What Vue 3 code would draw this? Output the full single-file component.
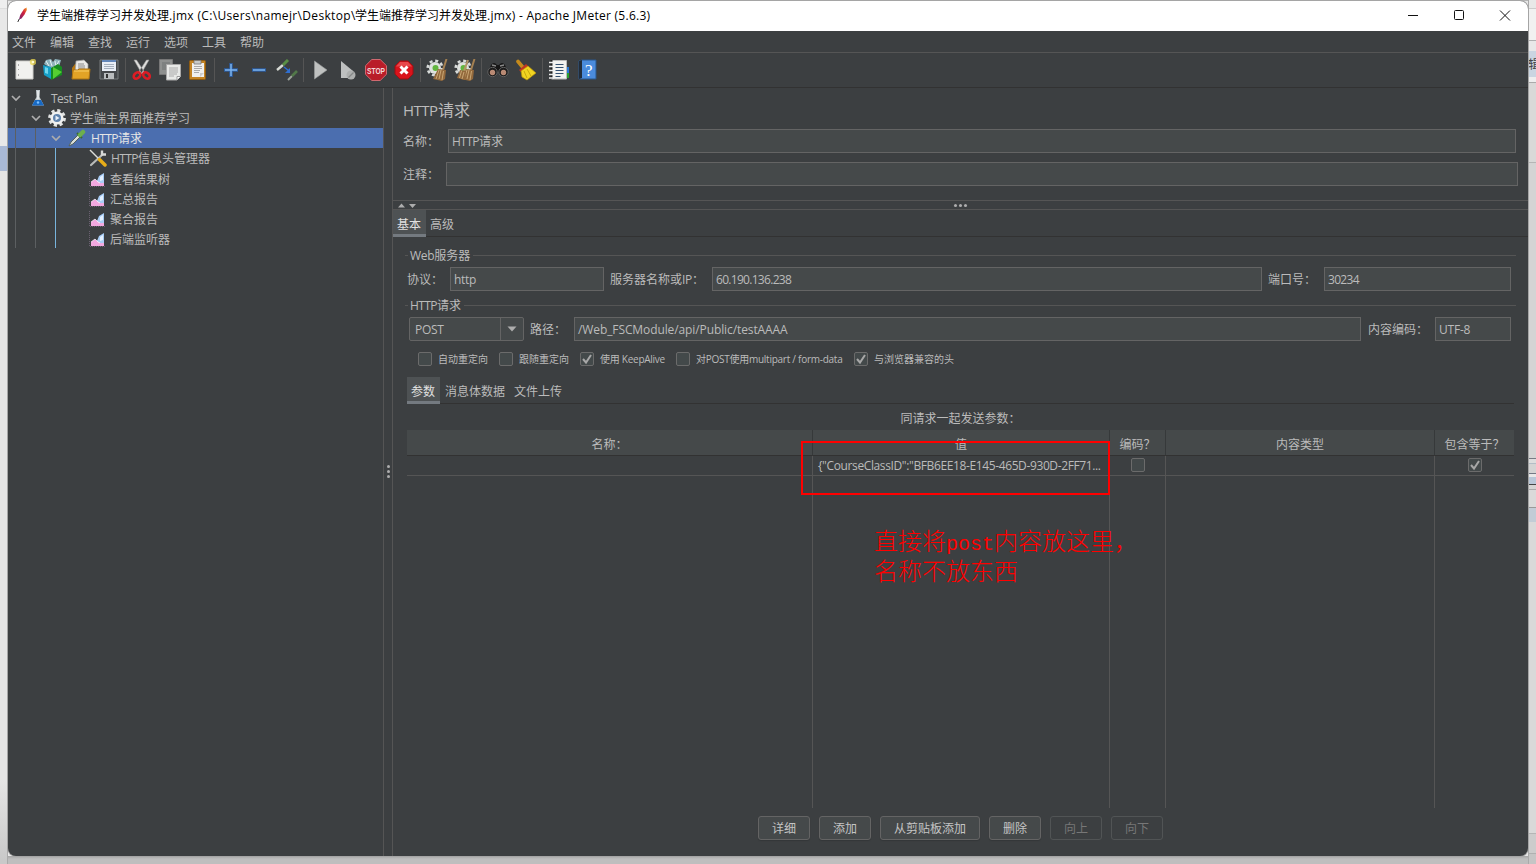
<script setup>
const menus = ['文件', '编辑', '查找', '运行', '选项', '工具', '帮助']

const listeners = ['查看结果树', '汇总报告', '聚合报告', '后端监听器']

const options = [
  { label: '自动重定向', checked: false, width: 81 },
  { label: '跟随重定向', checked: false, width: 81 },
  { label: '使用 KeepAlive', checked: true, width: 96, tight: true },
  { label: '对POST使用multipart / form-data', checked: false, width: 178, tight: true },
  { label: '与浏览器兼容的头', checked: true, width: 110 },
]

const buttons = [
  { label: '详细' },
  { label: '添加' },
  { label: '从剪贴板添加' },
  { label: '删除' },
  { label: '向上', disabled: true },
  { label: '向下', disabled: true },
]
</script>

<template>
  <div class="desktop">
    <div class="behind-left"></div>
    <div class="behind-right"><span>编辑</span></div>

    <div class="window">
      <header class="titlebar">
        <svg class="feather" width="12" height="16" viewBox="0 0 12 16">
          <defs>
            <linearGradient id="feather" x1="1" y1="0" x2="0" y2="1">
              <stop offset="0" stop-color="#f09a1c" />
              <stop offset="0.4" stop-color="#d4213c" />
              <stop offset="1" stop-color="#6b2273" />
            </linearGradient>
          </defs>
          <path d="M9.5 .6 7 2 3.2 8 2 12.5 4.5 11.5 7.5 7.5 9.8 3z" fill="url(#feather)" />
          <path d="M2.2 12 .8 15" stroke="#333" fill="none" />
        </svg>
        <h1>
          学生端推荐学习并发处理<span class="path">.jmx (C:\Users\namejr\Desktop\</span>学生端推荐学习并发处理<span class="product">.jmx) - Apache JMeter (5.6.3)</span>
        </h1>
        <div class="controls">
          <svg viewBox="0 0 12 12"><path d="M1 5.5h10" /></svg>
          <svg viewBox="0 0 12 12"><rect x="1.5" y=".5" width="9" height="9" rx="1" /></svg>
          <svg viewBox="0 0 12 12"><path d="M1 .5l10 10M11 .5l-10 10" /></svg>
        </div>
      </header>

      <nav class="menubar">
        <span v-for="menu in menus" :key="menu">{{ menu }}</span>
      </nav>

      <div class="toolbar">
        <!-- new -->
        <svg viewBox="0 0 22 22">
          <path d="M2 2h17v18H2z" fill="#f1f1ef" stroke="#cfcfcb" />
          <path d="M4.5 5v2M4.5 10v1M4.5 15v2" stroke="#aaa" />
          <circle cx="19" cy="3" r="3.2" fill="#e9d64d" opacity=".75" />
          <circle cx="19" cy="3" r="1.3" fill="#fffbd0" />
        </svg>
        <!-- templates -->
        <svg viewBox="0 0 22 22">
          <path d="M2 5l2-4 5-1 2 3 2-3 6 1-2 7-8 1z" fill="#8fb3bc" />
          <path d="M4 2l3 5M8 1l2 6M13 2l1 6M17 2l-3 5" stroke="#e4f1f1" />
          <path d="M1 6l8 2v12l-7-4z" fill="#169fc7" />
          <path d="M3 8l3 1v6l-3-1z" fill="#6dd6ec" />
          <path d="M9 9l7-4 4 3v8l-11 5z" fill="#168b21" />
          <path d="M11 8l9 5-9 7z" fill="#55cf32" />
        </svg>
        <!-- open -->
        <svg viewBox="0 0 22 22">
          <path d="M2 9l3-4h4v14H2z" fill="#b87812" />
          <path d="M6 2l8-1 4 4v9H5z" fill="#e9e9e7" stroke="#999" stroke-width=".7" />
          <path d="M8 5h6M8 7h7M8 9h7" stroke="#888" />
          <path d="M3 11h5l1-1h11l-1 10H2z" fill="#e2a326" stroke="#ad7413" />
          <path d="M4 12h15" stroke="#f8cd65" />
        </svg>
        <!-- save -->
        <svg viewBox="0 0 22 22">
          <path d="M2 1h18v19H2z" fill="#45484b" stroke="#777a7c" />
          <path d="M4 1h14v11H4z" fill="#e9eef6" />
          <path d="M4 1h14v2H4z" fill="#6387ba" />
          <path d="M6 5.500h10M6 7.500h10M6 9.500h10" stroke="#a4afbd" />
          <path d="M6 14h10v6H6z" fill="#b8bbbd" />
          <path d="M8 15h2v4H8z" fill="#333" />
        </svg>
        <i class="separator"></i>
        <!-- cut -->
        <svg viewBox="0 0 22 22">
          <path d="M3 1h2.500l8.500 13-3 1zM18 1h-2.500L7 14l3 1z" fill="#dededc" stroke="#999" stroke-width=".6" />
          <g fill="none" stroke="#dc1c24" stroke-width="2.600">
            <ellipse cx="6" cy="16.500" rx="3.700" ry="2.700" transform="rotate(-40 6 16.500)" />
            <ellipse cx="15.500" cy="16.500" rx="3.700" ry="2.700" transform="rotate(40 15.500 16.500)" />
          </g>
        </svg>
        <!-- copy -->
        <svg viewBox="0 0 22 22">
          <path d="M.5.5h13v15H.5z" fill="#8e908f" stroke="#777" />
          <path d="M3 4h8M3 6h8M3 8h4M3 10h4" stroke="#6f7272" />
          <path d="M7.500 5.500h14v12l-3.500 3.500H7.500z" fill="#e8e9e7" stroke="#aaa" />
          <path d="M10 9h9M10 11h9M10 13h9M10 15h8M10 17h5" stroke="#aaa" />
          <path d="M18 21v-3.500h3.500" fill="#fff" stroke="#999" />
        </svg>
        <!-- paste -->
        <svg viewBox="0 0 22 22">
          <rect x="2.500" y="1.500" width="16" height="19" rx="1" fill="#c48424" stroke="#8c5a12" />
          <path d="M5 4h12v14H5z" fill="#f0f0ee" />
          <path d="M7 1.500h7v3.500H7z" fill="#c9cbca" stroke="#777" stroke-width=".8" />
          <path d="M7 7.500h8M7 9.500h8M7 11.500h6M7 13.500h5" stroke="#aaa" />
          <path d="M13 18v-4h4" fill="#ccc" />
        </svg>
        <i class="separator"></i>
        <svg viewBox="0 0 22 22">
          <path d="M11 4v14M4 11h14" stroke="#2d5d9f" stroke-width="3.500" />
          <path d="M11 5v12M5 11h12" stroke="#7db4ee" stroke-width="1.500" />
        </svg>
        <svg viewBox="0 0 22 22">
          <path d="M4 11h14" stroke="#2d5d9f" stroke-width="3.500" />
          <path d="M5 11h12" stroke="#7db4ee" stroke-width="1.500" />
        </svg>
        <!-- toggle -->
        <svg viewBox="0 0 22 22">
          <path d="M1 11l6-5" stroke="#d7dbd5" stroke-width="2.400" />
          <path d="M7 6l5-5" stroke="#598f45" stroke-width="3" />
          <path d="M8 8l5 4" stroke="#2f6fd0" stroke-width="1.500" />
          <path d="M14 9v5H9z" fill="#2f6fd0" />
          <path d="M12 21l4-4" stroke="#9da39b" stroke-width="2" />
          <path d="M16 17l5-5" stroke="#527849" stroke-width="2.600" />
        </svg>
        <i class="separator"></i>
        <svg viewBox="0 0 22 22"><path d="M5.500 2L18 11 5.500 20z" fill="#bfc1c0" stroke="#999c9c" stroke-width=".6" /></svg>
        <svg viewBox="0 0 22 22">
          <path d="M4 2l12 10-2 7H4z" fill="#bec0c0" />
          <circle cx="14" cy="16" r="4.500" fill="#adafae" />
          <path d="M11.500 18.500l5-5" stroke="#858888" stroke-width="1.300" />
        </svg>
        <svg viewBox="0 0 22 22">
          <path d="M6.800.5h8.400l6.300 6.200v8.600l-6.300 6.200H6.800L.5 15.300V6.700z" fill="#b91d29" stroke="#cf6970" />
          <text x="2" y="14.500" textLength="18" lengthAdjust="spacingAndGlyphs" class="stop-text">STOP</text>
        </svg>
        <svg viewBox="0 0 22 22">
          <path d="M7 2h8l5 5v8l-5 5H7l-5-5V7z" fill="#d9131b" stroke="#9a1115" />
          <path d="M7 3h8l4 4.500H3z" fill="#ec605f" opacity=".7" />
          <path d="M7.500 7.500l7 7M14.500 7.500l-7 7" stroke="#fff" stroke-width="3" />
        </svg>
        <i class="separator"></i>
        <svg v-for="n in 2" :key="n" viewBox="0 0 22 22">
          <circle cx="9" cy="9" r="6" fill="#dfe2df" />
          <circle cx="9" cy="9" r="7.300" fill="none" stroke="#d8dbd9" stroke-width="2.600" stroke-dasharray="3 2.730" />
          <circle cx="9.500" cy="9" r="3" fill="#62b53f" />
          <path d="M20.500 0L17 11" stroke="#a48051" stroke-width="2" />
          <path d="M12 10l8 1-1 9-3 2-9-2z" fill="#93693c" />
          <path d="M13 11l-3 9M15 11l-2 9M17.500 12l-1.500 9" stroke="#cfae7c" stroke-width=".9" />
          <g v-if="n === 2">
            <path d="M14 1l-4 11" stroke="#b39567" stroke-width="2" />
            <path d="M6 11l6 1-1 9-8-2z" fill="#93693c" />
            <path d="M7.500 12l-2 7M10 13l-2 7" stroke="#cfae7c" stroke-width=".9" />
          </g>
        </svg>
        <i class="separator"></i>
        <!-- search -->
        <svg viewBox="0 0 22 22">
          <path d="M4 6q3-4 6 0h2q3-4 6 0l3 7H1z" fill="#161616" />
          <path d="M5 6l4 1M13 7l4-1" stroke="#8a8a8a" stroke-width="1.300" />
          <circle cx="5.500" cy="13" r="4.700" fill="#1c1c1c" stroke="#606060" />
          <circle cx="16.500" cy="13" r="4.700" fill="#1c1c1c" stroke="#606060" />
          <circle cx="5.500" cy="13.500" r="2.700" fill="#b98a74" />
          <circle cx="16.500" cy="13.500" r="2.700" fill="#b98a74" />
        </svg>
        <!-- clear search -->
        <svg viewBox="0 0 22 22">
          <path d="M3 2.500l5 6" stroke="#c58a1c" stroke-width="3.600" stroke-linecap="round" />
          <path d="M4 11l7-6 2.500 2.500L6 13z" fill="#bf3424" />
          <path d="M6 12l7-5 8 7-9 7-5-3z" fill="#f1d421" stroke="#b99309" stroke-width=".7" />
          <path d="M9 12l3 7M12 10l4 7" stroke="#c8a90d" />
        </svg>
        <i class="separator"></i>
        <!-- function helper -->
        <svg viewBox="0 0 22 22">
          <path d="M3.500 1.500h15v18.500h-15z" fill="#f3f3f1" stroke="#bbb" />
          <path d="M3.500 1v19" stroke="#222" stroke-width="2" />
          <path d="M1 3.500h5M1 7.500h5M1 11.500h5M1 15.500h5M1 19h5" stroke="#eee" stroke-width="1.400" />
          <path d="M7.500 5.500h8M7.500 8.500h8M7.500 11.500h8M7.500 14.500h8M7.500 17.500h5" stroke="#35506f" />
          <path d="M19 8h2v6h-2z" fill="#2878d7" />
          <path d="M19 14h2v5h-2z" fill="#29a02d" />
        </svg>
        <!-- help -->
        <svg viewBox="0 0 22 22">
          <path d="M3 2l3-1h14v19H3z" fill="#4a8bdc" stroke="#28578c" />
          <path d="M3 2l3-1v18l-3 1z" fill="#222c38" />
          <text x="12.800" y="17" text-anchor="middle" class="help-text">?</text>
        </svg>
      </div>

      <main class="body">
        <aside class="tree">
          <div class="row">
            <svg class="chevron" viewBox="0 0 10 10"><path d="M1 3l4 4 4-4" /></svg>
            <svg class="node-icon flask" viewBox="0 0 14 18">
              <path d="M5 1h4l-.5 7 4.500 8.500H1L5.500 8z" fill="#c4ccd1" />
              <path d="M4 11h6l3 5.500H1z" fill="#1769c4" />
              <path d="M7 2v8" stroke="#fff" />
              <circle cx="7" cy="13.500" r="1.200" fill="#79beff" />
            </svg>
            <span class="latin plan">Test Plan</span>
          </div>
          <div class="row level-1">
            <svg class="chevron" viewBox="0 0 10 10"><path d="M1 3l4 4 4-4" /></svg>
            <svg class="node-icon gear" viewBox="0 0 18 18">
              <circle cx="9" cy="9" r="7.500" fill="none" stroke="#e2e4e3" stroke-width="2.800" stroke-dasharray="3.200 2.690" />
              <circle cx="9" cy="9" r="5.300" fill="#5e82ac" stroke="#f0f1f0" stroke-width="2.600" />
              <path d="M7.500 6.500l4 2.500-4 2.500z" fill="#e8f0fa" />
            </svg>
            <span>学生端主界面推荐学习</span>
          </div>
          <div class="row level-2 selected">
            <svg class="chevron" viewBox="0 0 10 10"><path d="M1 3l4 4 4-4" /></svg>
            <svg class="node-icon dropper" viewBox="0 0 18 18">
              <path d="M1 17l2-4 7-7 2 2-7 7z" fill="#d9ded8" stroke="#53605d" />
              <path d="M9 4l5 5" stroke="#3c6b2d" stroke-width="2" />
              <path d="M12 6l3-3" stroke="#6daf4d" stroke-width="4.500" stroke-linecap="round" />
            </svg>
            <span><b class="http">HTTP</b>请求</span>
          </div>
          <div class="row level-3">
            <svg class="node-icon tools" viewBox="0 0 18 18">
              <path d="M2 16L13 6" stroke="#b8bbb8" stroke-width="2.200" stroke-linecap="round" />
              <path d="M13 1.500v4h4" fill="none" stroke="#d7d9d7" stroke-width="2.400" />
              <path d="M1 1l8 8" stroke="#dcddd9" stroke-width="1.500" />
              <path d="M10.500 10.500l5.500 5.500" stroke="#e7ad18" stroke-width="3.500" stroke-linecap="round" />
            </svg>
            <span><b class="http">HTTP</b>信息头管理器</span>
          </div>
          <div v-for="name in listeners" :key="name" class="row level-3 listener">
            <svg class="node-icon chart" viewBox="0 0 16 16">
              <path d="M.5 0v15.500H16" fill="none" stroke="#6a6070" stroke-dasharray="1 1" />
              <path d="M2 15v-4l4-3 2 2 2-2 5 4v3z" fill="#f3a9e0" />
              <path d="M8 10l2-5 5-3v10l-4 0z" fill="#a9cdf5" />
              <path d="M11 6l3-2v5l-3 1z" fill="#e6f2ff" />
              <path d="M2 11l4-3 2 2 1 1 2 1" fill="none" stroke="#fff" stroke-width=".7" />
            </svg>
            <span>{{ name }}</span>
          </div>
          <i class="guide guide-1"></i>
          <i class="guide guide-2"></i>
          <i class="guide guide-3"></i>
        </aside>

        <div class="splitter"><i></i><i></i><i></i></div>

        <section class="editor">
          <div class="heading">
            <h2><b>HTTP</b>请求</h2>
            <div class="field-row name-row">
              <label>名称：</label>
              <div class="field"><b class="http">HTTP</b>请求</div>
            </div>
            <div class="field-row comment-row">
              <label>注释：</label>
              <div class="field"></div>
            </div>
          </div>

          <div class="h-splitter">
            <svg width="18" height="7" viewBox="0 0 18 7"><path d="M0 5.500h7L3.500 1.500zM11 2h7l-3.500 4z" /></svg>
            <div class="grip"><i></i><i></i><i></i></div>
          </div>

          <div class="tabs">
            <span class="tab active">基本</span>
            <span class="tab">高级</span>
          </div>

          <div class="request">
            <div class="group-title"><span><em class="latin">Web</em>服务器</span></div>
            <div class="inputs">
              <label class="protocol-label">协议：</label>
              <div class="field latin protocol">http</div>
              <label class="server-label">服务器名称或<em class="latin">IP</em>：</label>
              <div class="field latin grow ip">60.190.136.238</div>
              <label class="port-label">端口号：</label>
              <div class="field latin port">30234</div>
            </div>

            <div class="group-title second"><span><b class="http">HTTP</b>请求</span></div>
            <div class="inputs method-row">
              <div class="combo latin">
                <span>POST</span>
                <i><svg width="10" height="6" viewBox="0 0 10 6"><path d="M.5.5h9L5 5.500z" /></svg></i>
              </div>
              <label class="path-label">路径：</label>
              <div class="field grow url">/Web_FSCModule/api/Public/testAAAA</div>
              <label class="encoding-label">内容编码：</label>
              <div class="field encoding">UTF-8</div>
            </div>

            <div class="options">
              <div v-for="option in options" :key="option.label" class="option" :style="{ width: `${option.width}px` }">
                <i class="checkbox">
                  <svg v-if="option.checked" viewBox="0 0 12 12"><path d="M2 6l3 3.500L10 2" /></svg>
                </i>
                <span :class="{ tight: option.tight }">{{ option.label }}</span>
              </div>
            </div>

            <div class="tabs inner">
              <span class="tab active">参数</span>
              <span class="tab">消息体数据</span>
              <span class="tab">文件上传</span>
            </div>

            <p class="caption">同请求一起发送参数：</p>

            <div class="table">
              <div class="column name"><div class="th">名称：</div><div class="td"></div></div>
              <div class="column value">
                <div class="th">值</div>
                <div class="td">{"CourseClassID":"BFB6EE18-E145-465D-930D-2FF71...</div>
              </div>
              <div class="column encode">
                <div class="th">编码？</div>
                <div class="td"><i class="checkbox"></i></div>
              </div>
              <div class="column type"><div class="th">内容类型</div><div class="td"></div></div>
              <div class="column include">
                <div class="th">包含等于？</div>
                <div class="td"><i class="checkbox"><svg viewBox="0 0 12 12"><path d="M2 6l3 3.500L10 2" /></svg></i></div>
              </div>
            </div>

            <div class="actions">
              <button v-for="button in buttons" :key="button.label" type="button" :disabled="button.disabled">
                {{ button.label }}
              </button>
            </div>
          </div>
        </section>
      </main>
    </div>

    <div class="mark-box"></div>
    <div class="mark-note">直接将<span>post</span>内容放这里，<br />名称不放东西</div>
  </div>
</template>

<style>
body {
  overflow: hidden;
}
</style>

<style scoped>
.desktop,
.desktop * {
  box-sizing: border-box;
}

.desktop {
  position: relative;
  width: 1536px;
  height: 864px;
  padding: 1px 8px 8px;
  overflow: hidden;
  background: linear-gradient(#b5b5b5 0 1px, #e8e8e8 1px 856px, #a5a5a5 856px, #bebebe 859px);
  color: #bbbbbb;
  font: 12px/16px 'Open Sans', 'Noto Sans CJK SC', sans-serif;
  white-space: nowrap;
}

.behind-left {
  position: absolute;
  left: 0;
  top: 0;
  width: 8px;
  height: 864px;
  background:
    linear-gradient(90deg, transparent 0 7px, #aaa 7px),
    linear-gradient(#eee 0 8px, #ddd 8px 9px, #e8e8e8 9px 146px, #a9b9d5 146px 171px, #e5e5e5 171px 780px, #c9c9c9 860px);
}

.behind-right {
  position: absolute;
  left: 1528px;
  top: 0;
  width: 8px;
  height: 864px;
  overflow: hidden;
  background:
    linear-gradient(90deg, #aaa 0 1px, transparent 1px),
    linear-gradient(
      #e8e8e8 0 8px, #ccc 8px 9px, #f1f1f1 9px 40px, #b0b0b0 40px 41px, #e8e8e8 41px 51px,
      #cad5e1 51px 77px, #eee 77px 82px, #aaa 82px 83px, #d9d9d8 83px 162px, #b5b5b5 162px 163px,
      #d4d4d4 163px 458px, #777b84 458px 459px, #ddd 459px 463px, #b3bdc6 463px 464px, #d4d4d4 464px 473px,
      #747985 473px 474px, #e8e8e8 474px 477px, #b9c7d8 477px 484px, #444 484px 485px, #d4d4d4 485px 489px,
      #aaa 489px 490px, #dadada 490px 507px, #999 507px 508px, #c2ccd6 508px 522px, #d9d9d9 522px 833px,
      #b5b5b5 833px 834px, #ccc 834px 853px, #b0b0b0 853px 854px, #c5c5c5 854px
    );
}

.behind-right span {
  position: absolute;
  left: -12px;
  top: 57px;
  color: #444;
  font-size: 12px;
}

.window {
  position: relative;
  width: 1520px;
  height: 855px;
  display: flex;
  flex-direction: column;
  overflow: hidden;
  border-radius: 8px;
  background: #3c3f41;
  box-shadow: 0 0 0 1px #a5a5a5;
}

.titlebar {
  height: 30px;
  display: flex;
  align-items: center;
  background: #fff;
  color: #000;
}

.feather {
  margin: -2px 8px 0 9px;
}

h1 {
  flex: 1;
  margin: 0;
  font-size: 12px;
  font-weight: 400;
}

.path {
  display: inline-block;
  width: 186px;
  letter-spacing: 0.34px;
}

.product {
  letter-spacing: 0.27px;
}

.controls {
  display: flex;
  gap: 34px;
  padding-right: 17px;
}

.controls svg {
  width: 12px;
  height: 12px;
  fill: none;
  stroke: #111;
  stroke-width: 1;
}

.menubar {
  height: 22px;
  display: flex;
  align-items: center;
  gap: 14px;
  padding: 2px 0 0 4px;
  border-bottom: 1px solid #555555;
}

.toolbar {
  height: 35px;
  display: flex;
  align-items: center;
  padding-left: 3px;
  border-bottom: 1px solid #323232;
}

.toolbar svg {
  width: 22px;
  height: 22px;
  margin: 0 3px;
  fill: none;
}

.separator {
  width: 1px;
  height: 24px;
  margin: 0 2px;
  background: #555555;
}

.stop-text {
  fill: #f3d8da;
  font: bold 9.5px 'Liberation Sans', sans-serif;
}

.help-text {
  fill: #fff;
  font: 17px 'Liberation Serif', serif;
}

.body {
  flex: 1;
  min-height: 0;
  display: flex;
}

.tree {
  position: relative;
  width: 376px;
  border-right: 1px solid #555555;
}

.row {
  height: 20px;
  display: flex;
  align-items: center;
  padding-left: 3px;
}

.row span {
  position: relative;
  top: 1px;
}

.level-1 {
  padding-left: 23px;
}

.level-2 {
  padding-left: 43px;
}

.level-3 {
  padding-left: 81px;
}

.listener {
  padding-top: 2px;
}

.selected {
  background: #4b6eaf;
  color: #e6e6e6;
}

.chevron {
  width: 10px;
  height: 10px;
  fill: none;
  stroke: #adadad;
  stroke-width: 1.7;
}

.node-icon {
  width: 18px;
  height: 18px;
  margin: 0 4px;
  fill: none;
}

.flask {
  width: 14px;
  margin: 0 6px 0 10px;
}

.gear {
  margin: 0 4px 0 7px;
}

.dropper {
  margin: 0 5px 0 7px;
}

.tools {
  margin: 0 4px 0 0;
}

.chart {
  width: 16px;
  height: 16px;
  margin: 0 5px 0 0;
}

.guide {
  position: absolute;
  width: 1px;
  bottom: 608px;
  background: #5c5f61;
}

.guide-1 {
  left: 7px;
  top: 20px;
}

.guide-2 {
  left: 27px;
  top: 40px;
}

.guide-3 {
  left: 47px;
  top: 60px;
  background: #78b4dc;
}

.splitter {
  width: 9px;
  display: flex;
  flex-direction: column;
  align-items: center;
  justify-content: center;
  gap: 2px;
  padding-bottom: 2px;
  border-right: 1px solid #555555;
}

.splitter i,
.grip i {
  width: 3px;
  height: 3px;
  border-radius: 50%;
  background: #adadad;
}

.editor {
  flex: 1;
  display: flex;
  flex-direction: column;
}

b,
em {
  font-weight: 400;
  font-style: normal;
}

.latin {
  letter-spacing: -0.3px;
}

.plan {
  letter-spacing: -0.5px;
}

.ip {
  letter-spacing: -0.7px;
}

.port {
  letter-spacing: -0.7px;
}

.http {
  display: inline-block;
  width: 27px;
  letter-spacing: -0.6px;
}

.heading {
  height: 112px;
  padding: 12px 0 0 10px;
}

h2 {
  height: 20px;
  margin: 0 0 9px;
  font-size: 16px;
  line-height: 20px;
  font-weight: 400;
}

h2 b {
  display: inline-block;
  width: 35px;
  font-size: 15px;
  letter-spacing: -0.5px;
}

label {
  padding-top: 2px;
}

.field-row {
  display: flex;
  align-items: center;
  margin-bottom: 9px;
}

.name-row {
  margin-right: 12px;
}

.name-row label {
  width: 45px;
}

.comment-row {
  margin-right: 10px;
}

.comment-row label {
  width: 43px;
}

.field {
  height: 24px;
  padding: 0 3px;
  border: 1px solid #646464;
  background: #45494a;
  line-height: 23px;
}

.field-row .field,
.grow {
  flex: 1;
}

.name-row .field {
  line-height: 24px;
}

.h-splitter {
  height: 10px;
  display: flex;
  align-items: center;
  border-top: 1px solid #555555;
  border-bottom: 1px solid #555555;
}

.h-splitter svg {
  margin-left: 5px;
  fill: #adadad;
}

.grip {
  display: flex;
  gap: 2px;
  margin-left: 538px;
}

.tabs {
  height: 27px;
  display: flex;
  border-bottom: 1px solid #323232;
}

.tab {
  height: 27px;
  padding: 0 4px;
  line-height: 29px;
}

.tab.active {
  width: 33px;
  border-bottom: 3px solid #747a80;
  background: #4e5254;
  color: #e0e0e0;
}

.request {
  flex: 1;
  display: flex;
  flex-direction: column;
  padding: 10px 12px 0;
}

.group-title {
  height: 16px;
  display: flex;
  align-items: center;
  gap: 3px;
}

.group-title::before,
.group-title::after {
  content: '';
  width: 3px;
  height: 1px;
  background: #555555;
}

.group-title::after {
  flex: 1;
}

.group-title span {
  position: relative;
  top: 1px;
  margin-left: -1px;
}

.inputs {
  display: flex;
  align-items: center;
  margin: 4px 5px 0 2px;
}

.protocol-label {
  width: 43px;
}

.protocol {
  width: 154px;
}

.server-label {
  width: 108px;
  padding-left: 6px;
}

.port-label {
  width: 62px;
  padding-left: 6px;
}

.port {
  width: 187px;
}

.second {
  margin-top: 6px;
}

.method-row {
  margin: 4px 5px 0 4px;
}

.combo {
  width: 115px;
  height: 24px;
  display: flex;
  border: 1px solid #646464;
  border-radius: 2px;
  background: #45494a;
  line-height: 23px;
}

.combo span {
  flex: 1;
  padding-left: 5px;
}

.combo i {
  width: 23px;
  display: flex;
  align-items: center;
  justify-content: center;
  border-left: 1px solid #646464;
}

.combo svg {
  fill: #adadad;
}

.path-label {
  width: 50px;
  padding-left: 6px;
}

.url {
  letter-spacing: -0.1px;
}

.encoding-label {
  width: 74px;
  padding-left: 7px;
}

.encoding {
  width: 76px;
  letter-spacing: -0.2px;
}

.options {
  height: 36px;
  display: flex;
  align-items: center;
  padding-left: 13px;
}

.option {
  display: flex;
  align-items: center;
  gap: 6px;
  font-size: 10px;
}

.tight {
  letter-spacing: -0.26px;
}

.checkbox {
  width: 14px;
  height: 14px;
  flex: none;
  display: flex;
  border: 1px solid #6b6b6b;
  border-radius: 2px;
  background: #43494a;
}

.checkbox svg {
  fill: none;
  stroke: #a7a7a7;
  stroke-width: 2;
}

.inner {
  margin: 0 2px;
}

.inner .tab + .tab {
  padding: 0 4px 0 5px;
}

.caption {
  height: 26px;
  margin: 0;
  line-height: 30px;
  text-align: center;
}

.table {
  height: 378px;
  display: flex;
  margin: 0 2px;
}

.column {
  border-right: 1px solid #555555;
}

.column:last-child {
  border-right: 0;
}

.name {
  width: 406px;
}

.value {
  width: 297px;
}

.encode {
  width: 56px;
}

.type {
  width: 269px;
}

.include {
  flex: 1;
}

.th {
  height: 26px;
  margin-right: -1px;
  border-right: 1px solid #36393a;
  border-bottom: 1px solid #323232;
  background: #45494a;
  line-height: 30px;
  text-align: center;
}

.column:last-child .th {
  margin-right: 0;
  border-right: 0;
}

.td {
  height: 20px;
  display: flex;
  align-items: center;
  justify-content: center;
  padding-bottom: 1px;
  border-bottom: 1px solid #555555;
}

.value .td {
  justify-content: flex-start;
  padding: 0 0 0 5px;
  letter-spacing: -0.38px;
}

.actions {
  display: flex;
  justify-content: center;
  gap: 9px;
  margin-top: 8px;
}

button {
  height: 24px;
  padding: 2px 13px 0;
  border: 1px solid #646464;
  border-radius: 3px;
  background: #45494a;
  box-shadow: 0 1px 1px #343739;
  color: #c4c4c4;
  font: inherit;
}

button:disabled {
  border-color: #515455;
  background: #3c3f41;
  box-shadow: none;
  color: #777777;
}

.mark-box {
  position: absolute;
  left: 801px;
  top: 441px;
  width: 309px;
  height: 54px;
  border: 2px solid #ff0000;
}

.mark-note {
  position: absolute;
  left: 874px;
  top: 525px;
  color: #ff0000;
  font: 300 24px/30px 'Noto Sans CJK SC', sans-serif;
}

.mark-note span {
  font: 20px/20px 'Liberation Mono', monospace;
}
</style>
